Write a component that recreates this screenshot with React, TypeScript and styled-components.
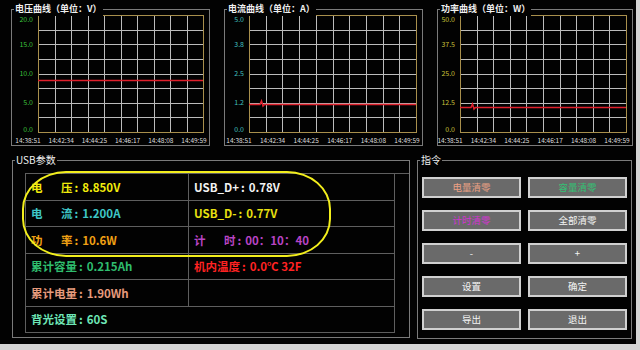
import styled, { createGlobalStyle } from 'styled-components';

const GlobalStyle = createGlobalStyle`
  html, body {
    margin: 0;
    padding: 0;
    background: #d4d4d4;
  }
  body {
    width: 640px;
    height: 350px;
    overflow: hidden;
    font-family: 'Noto Sans CJK SC', 'Noto Sans', sans-serif;
  }
`;

const Window = styled.div`
  width: 636px;
  height: 344px;
  box-sizing: border-box;
  padding: 9px 0 0 11px;
  background: #020202;
  display: flex;
  flex-direction: column;
`;

const ChartRow = styled.div`
  display: flex;
  gap: 14px;
`;

const BottomRow = styled.div`
  display: flex;
  gap: 7px;
  margin: 14px 0 0 1px;
`;

const GroupBox = styled.div<{ $w: number; $h: number }>`
  position: relative;
  box-sizing: border-box;
  width: ${(p) => p.$w}px;
  height: ${(p) => p.$h}px;
  border: 1px solid #7a7a7a;
`;

const GroupTitle = styled.span<{ $bold?: boolean }>`
  position: absolute;
  top: -8px;
  left: 2px;
  padding: 0 1px;
  background: #020202;
  color: #f0f0f0;
  font-size: ${(p) => (p.$bold ? '9px' : '10px')};
  font-weight: ${(p) => (p.$bold ? 700 : 400)};
  line-height: 14px;
  white-space: nowrap;
`;

const UsbBody = styled.div`
  padding: 12px 0 0 12px;
`;

const ParamTable = styled.div`
  display: grid;
  grid-template-columns: 163px 206px;
  grid-template-rows: repeat(6, 26.5px);
  border-top: 1px solid #5e5e5e;
  border-left: 1px solid #5e5e5e;
`;

const Cell = styled.div<{ $color: string; $wide?: boolean }>`
  box-sizing: border-box;
  display: flex;
  align-items: center;
  padding-left: 5px;
  border-right: 1px solid #5e5e5e;
  border-bottom: 1px solid #5e5e5e;
  grid-column: ${(p) => (p.$wide ? 'span 2' : 'auto')};
  color: ${(p) => p.$color};
  font-size: 11.5px;
  font-weight: 700;
  white-space: nowrap;
`;

const Gap = styled.span`
  display: inline-block;
  width: 18.5px;
`;

const Colon = styled.span`
  display: inline-block;
  padding: 0 4px 0 2px;
`;

const Highlight = styled.div`
  position: absolute;
  left: 9px;
  top: 10px;
  width: 309px;
  height: 86px;
  box-sizing: border-box;
  border: 2px solid #f2ee1c;
  border-radius: 44px / 38px;
  pointer-events: none;
`;

const CmdGrid = styled.div`
  display: grid;
  grid-template-columns: 99px 99px;
  grid-auto-rows: 21px;
  column-gap: 7px;
  row-gap: 12px;
  padding: 16px 0 0 4px;
`;

const CmdButton = styled.button<{ $color?: string }>`
  box-sizing: border-box;
  margin: 0;
  padding: 0;
  border: 2px solid #d0d0d0;
  background: #6a6a6a;
  color: ${(p) => p.$color || '#f4f4f4'};
  font-family: 'Noto Sans CJK SC', 'Noto Sans', sans-serif;
  font-size: 9.5px;
  line-height: 17px;
`;

type ChartProps = {
  w: number;
  left: number;
  labels: string[];
  labelColor: string;
  value: number;
  max: number;
  bump?: boolean;
};

const times = ['14:38:51', '14:42:34', '14:44:25', '14:46:17', '14:48:08', '14:49:59'];

function Chart({ w, left, labels, labelColor, value, max, bump }: ChartProps) {
  const top = 5;
  const bottom = 122;
  const right = w - 6;
  const pw = right - left;
  const ph = bottom - top;
  const y = Math.round(bottom - (value / max) * ph) + 0.5;
  const line = bump
    ? `M${left} ${y} L${left + 11} ${y} L${left + 12.5} ${y - 3.5} L${left + 14} ${y + 1.5} L${left + 15.5} ${y} L${right} ${y}`
    : `M${left} ${y} L${right} ${y}`;

  return (
    <svg width={w} height={135} style={{ display: 'block' }}>
      {Array.from({ length: 9 }, (_, i) => {
        const x = Math.round(left + ((i + 1) * pw) / 10) + 0.5;
        return <line key={'v' + i} x1={x} y1={top} x2={x} y2={bottom} stroke="#bcbcbc" strokeWidth={1} />;
      })}
      {Array.from({ length: 7 }, (_, i) => {
        const gy = Math.round(top + ((i + 1) * ph) / 8) + 0.5;
        return <line key={'h' + i} x1={left} y1={gy} x2={right} y2={gy} stroke="#bcbcbc" strokeWidth={1} />;
      })}
      <rect x={left + 0.5} y={top + 0.5} width={pw} height={ph} fill="none" stroke="#a88f4c" strokeWidth={1} />
      <path d={line} fill="none" stroke="#e0202c" strokeWidth={1.5} />
      {labels.map((l, i) => {
        const ly = Math.min(Math.max(top + (i * ph) / 4, top + 4), bottom - 3);
        return (
          <text key={l} x={left - 5} y={ly + 2.5} fill={labelColor} fontSize={7} textAnchor="end">
            {l}
          </text>
        );
      })}
      {times.map((t, i) => (
        <text key={t} x={left - 10 + (i * (pw + 1)) / 5} y={133} fill="#dedede" fontSize={6.5} textAnchor="middle">
          {t}
        </text>
      ))}
    </svg>
  );
}

function Key({ k }: { k: string }) {
  if (k.length === 2) {
    return (
      <>
        {k[0]}
        <Gap />
        {k[1]}
        <Colon>:</Colon>
      </>
    );
  }
  return (
    <>
      {k}
      <Colon>:</Colon>
    </>
  );
}

const params: { k: string; v: string; color: string; wide?: boolean }[] = [
  { k: '电压', v: '8.850V', color: '#f2ec0c' },
  { k: 'USB_D+', v: '0.78V', color: '#f2f2f2' },
  { k: '电流', v: '1.200A', color: '#3ec6c6' },
  { k: 'USB_D-', v: '0.77V', color: '#e8e010' },
  { k: '功率', v: '10.6W', color: '#f0a014' },
  { k: '计时', v: '00：10：40', color: '#b844c4' },
  { k: '累计容量', v: '0.215Ah', color: '#2fbd6e' },
  { k: '机内温度', v: '0.0℃ 32F', color: '#ff2222' },
  { k: '累计电量', v: '1.90Wh', color: '#e69a7c' },
  { k: '', v: '', color: '#fff' },
  { k: '背光设置', v: '60S', color: '#6ee6b6', wide: true },
];

const commands: { label: string; color?: string }[] = [
  { label: '电量清零', color: '#eaa084' },
  { label: '容量清零', color: '#34c074' },
  { label: '计时清零', color: '#d234d2' },
  { label: '全部清零' },
  { label: '-' },
  { label: '+' },
  { label: '设置' },
  { label: '确定' },
  { label: '导出' },
  { label: '退出' },
];

export default function App() {
  return (
    <>
      <GlobalStyle />
      <Window>
        <ChartRow>
          <GroupBox $w={199} $h={137}>
            <GroupTitle $bold>电压曲线（单位：V）</GroupTitle>
            <Chart w={197} left={26} labels={['20.0', '15.0', '10.0', '5.0', '0.0']} labelColor="#3cc03c" value={8.85} max={20} />
          </GroupBox>
          <GroupBox $w={199} $h={137}>
            <GroupTitle $bold>电流曲线（单位：A）</GroupTitle>
            <Chart w={197} left={24} labels={['5.0', '3.8', '2.5', '1.2', '0.0']} labelColor="#40c0c0" value={1.2} max={5} bump />
          </GroupBox>
          <GroupBox $w={196} $h={137}>
            <GroupTitle $bold>功率曲线（单位：W）</GroupTitle>
            <Chart w={194} left={22} labels={['50.0', '37.5', '25.0', '12.5', '0.0']} labelColor="#c8c03a" value={10.6} max={50} bump />
          </GroupBox>
        </ChartRow>
        <BottomRow>
          <GroupBox $w={398} $h={178}>
            <GroupTitle>USB参数</GroupTitle>
            <UsbBody>
              <ParamTable>
                {params.map((p, i) => (
                  <Cell key={i} $color={p.color} $wide={p.wide}>
                    {p.k && <Key k={p.k} />}
                    {p.v}
                  </Cell>
                ))}
              </ParamTable>
            </UsbBody>
            <Highlight />
          </GroupBox>
          <GroupBox $w={215} $h={179}>
            <GroupTitle>指令</GroupTitle>
            <CmdGrid>
              {commands.map((c) => (
                <CmdButton key={c.label} $color={c.color}>
                  {c.label}
                </CmdButton>
              ))}
            </CmdGrid>
          </GroupBox>
        </BottomRow>
      </Window>
    </>
  );
}
